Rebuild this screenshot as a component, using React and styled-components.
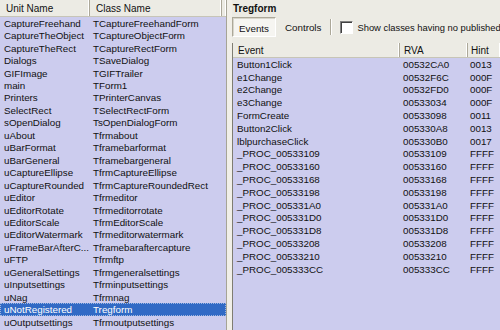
import React from "react";
import styled, { createGlobalStyle } from "styled-components";

const units = [
  ["CaptureFreehand", "TCaptureFreehandForm"],
  ["CaptureTheObject", "TCaptureObjectForm"],
  ["CaptureTheRect", "TCaptureRectForm"],
  ["Dialogs", "TSaveDialog"],
  ["GIFImage", "TGIFTrailer"],
  ["main", "TForm1"],
  ["Printers", "TPrinterCanvas"],
  ["SelectRect", "TSelectRectForm"],
  ["sOpenDialog", "TsOpenDialogForm"],
  ["uAbout", "Tfrmabout"],
  ["uBarFormat", "Tframebarformat"],
  ["uBarGeneral", "Tframebargeneral"],
  ["uCaptureEllipse", "TfrmCaptureEllipse"],
  ["uCaptureRounded", "TfrmCaptureRoundedRect"],
  ["uEditor", "Tfrmeditor"],
  ["uEditorRotate", "Tfrmeditorrotate"],
  ["uEditorScale", "TfrmEditorScale"],
  ["uEditorWatermark", "Tfrmeditorwatermark"],
  ["uFrameBarAfterC...", "Tframebaraftercapture"],
  ["uFTP", "Tfrmftp"],
  ["uGeneralSettings", "Tfrmgeneralsettings"],
  ["uInputsettings", "Tfrminputsettings"],
  ["uNag", "Tfrmnag"],
  ["uNotRegistered", "Tregform"],
  ["uOutputsettings", "Tfrmoutputsettings"],
];

const events = [
  ["Button1Click", "00532CA0", "0013"],
  ["e1Change", "00532F6C", "000F"],
  ["e2Change", "00532FD0", "000F"],
  ["e3Change", "00533034", "000F"],
  ["FormCreate", "00533098", "0011"],
  ["Button2Click", "005330A8", "0013"],
  ["lblpurchaseClick", "005330B0", "0017"],
  ["_PROC_00533109", "00533109", "FFFF"],
  ["_PROC_00533160", "00533160", "FFFF"],
  ["_PROC_00533168", "00533168", "FFFF"],
  ["_PROC_00533198", "00533198", "FFFF"],
  ["_PROC_005331A0", "005331A0", "FFFF"],
  ["_PROC_005331D0", "005331D0", "FFFF"],
  ["_PROC_005331D8", "005331D8", "FFFF"],
  ["_PROC_00533208", "00533208", "FFFF"],
  ["_PROC_00533210", "00533210", "FFFF"],
  ["_PROC_005333CC", "005333CC", "FFFF"],
];

const GlobalStyle = createGlobalStyle`
  body {
    margin: 0;
    background: #ecebe4;
    font-family: "Liberation Sans", Arial, sans-serif;
    font-size: 9.8px;
    color: #111;
  }
`;

const Window = styled.div`
  width: 500px;
  height: 330px;
  display: flex;
  overflow: hidden;
  background: #ecebe4;
`;

const LeftPane = styled.div`
  width: 226px;
  flex: none;
  background: #ccccee;
  display: flex;
  flex-direction: column;
`;

const Splitter = styled.div`
  width: 6px;
  flex: none;
  background: #f1efe8;
  border-left: 1px solid #a6a496;
  box-sizing: border-box;
`;

const RightPane = styled.div`
  flex: 1;
  display: flex;
  flex-direction: column;
  min-width: 0;
`;

const HeaderRow = styled.div`
  display: grid;
  grid-template-columns: ${(p) => p.cols};
  height: ${(p) => p.h}px;
  flex: none;
  background: #ecebe4;
  border-bottom: 1px solid #c7c5b7;
  box-sizing: border-box;
`;

const HeaderCell = styled.div`
  padding-left: ${(p) => p.pad}px;
  display: flex;
  align-items: center;
  border-right: 1px solid #aca899;
  box-shadow: inset -1px 0 0 #fff;
  white-space: nowrap;
  overflow: hidden;
  font-size: 10px;
  &:last-child {
    border-right: ${(p) => (p.open ? "none" : "1px solid #aca899")};
  }
`;

const Row = styled.div`
  display: grid;
  grid-template-columns: ${(p) => p.cols};
  height: ${(p) => p.h}px;
  align-items: center;
  white-space: nowrap;
  background: ${(p) => (p.selected ? "#316ac5" : "transparent")};
  color: ${(p) => (p.selected ? "#fff" : "#111")};
  outline: ${(p) => (p.selected ? "1px dotted #9fb6e0" : "none")};
  outline-offset: -1px;
`;

const Cell = styled.span`
  padding-left: ${(p) => p.pad}px;
  overflow: hidden;
`;

const Title = styled.div`
  height: 16px;
  padding-left: 1px;
  font-weight: bold;
  font-size: 10px;
  display: flex;
  align-items: center;
  flex: none;
`;

const Toolbar = styled.div`
  height: 22px;
  display: flex;
  align-items: center;
  margin-bottom: 5px;
  flex: none;
  white-space: nowrap;
`;

const ToolButton = styled.div`
  height: 20px;
  box-sizing: border-box;
  padding: 0 ${(p) => (p.pressed ? 6 : 8)}px;
  display: flex;
  align-items: center;
  padding-top: ${(p) => (p.pressed ? 2 : 0)}px;
  background: ${(p) => (p.pressed ? "#f6f5f1" : "transparent")};
  border: 1px solid transparent;
  ${(p) =>
    p.pressed &&
    `border-color: #aca899 #fff #fff #aca899;
     box-shadow: inset 1px 1px 0 #d8d6cc;`}
`;

const Separator = styled.div`
  width: 2px;
  height: 16px;
  border-left: 1px solid #aca899;
  border-right: 1px solid #fff;
  box-sizing: border-box;
  margin: 0 6px 0 0;
`;

const CheckLabel = styled.label`
  display: flex;
  align-items: center;
  gap: 4px;
  margin-left: 2px;
  font-size: 9.4px;
`;

const CheckBox = styled.span`
  width: 11px;
  height: 11px;
  background: #fff;
  border: 1px solid;
  border-color: #808080 #fff #fff #808080;
  box-shadow: inset 1px 1px 0 #404040;
  flex: none;
`;

const EventList = styled.div`
  flex: 1;
  background: #ccccee;
  border-left: 1px solid #7f7d72;
  display: flex;
  flex-direction: column;
  min-height: 0;
`;

const leftCols = "90px 1fr";
const rightCols = "167px 68px 1fr";

export default function App() {
  return (
    <>
      <GlobalStyle />
      <Window>
        <LeftPane>
          <HeaderRow cols="90px 132px 4px" h={17}>
            <HeaderCell pad={6}>Unit Name</HeaderCell>
            <HeaderCell pad={6}>Class Name</HeaderCell>
            <HeaderCell pad={0} open />
          </HeaderRow>
          {units.map(([unit, cls]) => (
            <Row
              key={unit}
              cols={leftCols}
              h={12.46}
              selected={unit === "uNotRegistered"}
            >
              <Cell pad={4}>{unit}</Cell>
              <Cell pad={3}>{cls}</Cell>
            </Row>
          ))}
        </LeftPane>
        <Splitter />
        <RightPane>
          <Title>Tregform</Title>
          <Toolbar>
            <ToolButton pressed>Events</ToolButton>
            <ToolButton>Controls</ToolButton>
            <Separator />
            <CheckLabel>
              <CheckBox />
              Show classes having no published
            </CheckLabel>
          </Toolbar>
          <EventList>
            <HeaderRow cols={rightCols} h={15}>
              <HeaderCell pad={5}>Event</HeaderCell>
              <HeaderCell pad={4}>RVA</HeaderCell>
              <HeaderCell pad={3} open>
                Hint
              </HeaderCell>
            </HeaderRow>
            {events.map(([name, rva, hint]) => (
              <Row key={name} cols={rightCols} h={12.8}>
                <Cell pad={4}>{name}</Cell>
                <Cell pad={3}>{rva}</Cell>
                <Cell pad={2}>{hint}</Cell>
              </Row>
            ))}
          </EventList>
        </RightPane>
      </Window>
    </>
  );
}
